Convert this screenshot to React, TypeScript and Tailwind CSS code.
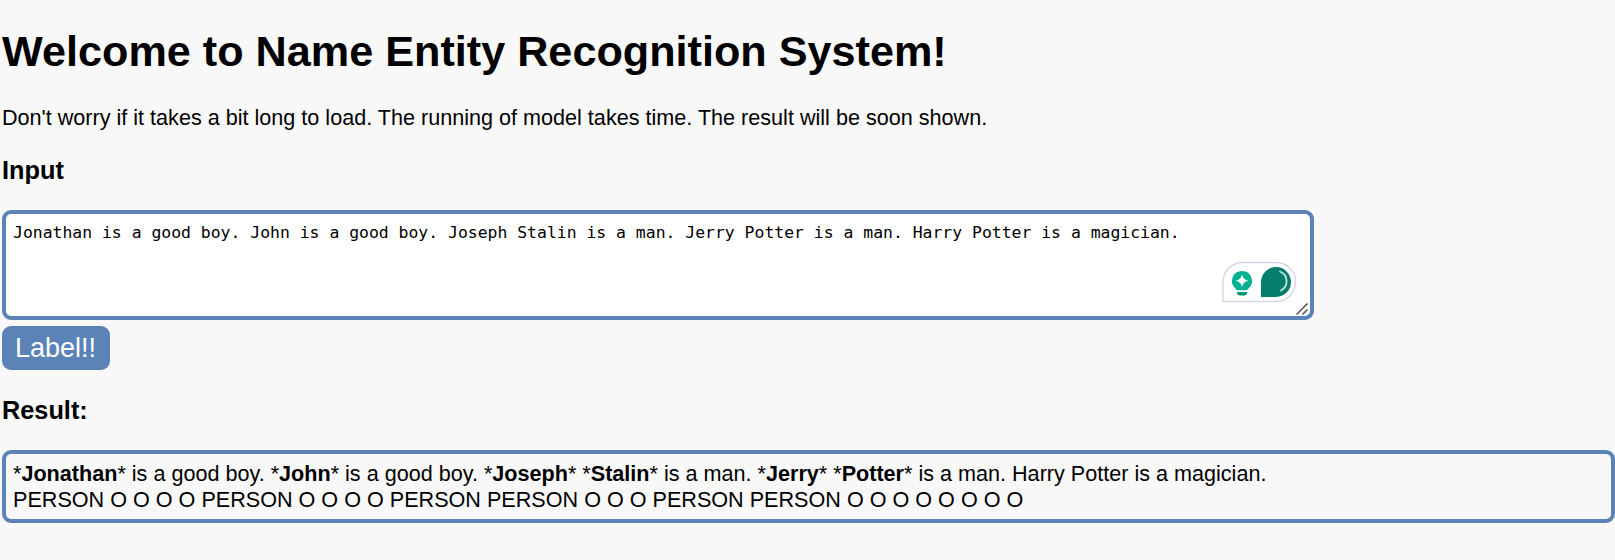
import React from 'react';

const sentence =
  'Jonathan is a good boy. John is a good boy. Joseph Stalin is a man. Jerry Potter is a man. Harry Potter is a magician.';

const tags =
  'PERSON O O O O PERSON O O O O PERSON PERSON O O O PERSON PERSON O O O O O O O O';

function AssistantBadge() {
  return (
    <svg className="absolute right-[12px] bottom-[13px]" width="76" height="42" viewBox="0 0 76 42" fill="none">
      <path
        d="M1 40.5V20.500A19.500 19.500 0 0 1 20.500 1.500H54A19.500 19.500 0 0 1 54 40.500Z"
        fill="#fff"
        stroke="#d3d6e4"
        strokeWidth="1.4"
      />
      <path
        d="M20 10a10 10 0 0 1 6.600 17.500c-.9.8-1.300 1.200-1.700 1.800h-9.800c-.4-.6-.8-1-1.700-1.800A10 10 0 0 1 20 10Z"
        fill="#00b292"
      />
      <path d="M15 31h10v.6a3 3 0 0 1-3 3h-4a3 3 0 0 1-3-3Z" fill="#009678" />
      <path
        d="M20 13.600c1.300 4 2.200 4.900 6.200 6.200-4 1.300-4.900 2.200-6.200 6.200-1.300-4-2.200-4.900-6.200-6.200 4-1.300 4.900-2.200 6.200-6.200Z"
        fill="#fff"
      />
      <path d="M39 36V21A15 15 0 1 1 54 36Z" fill="#047d6c" />
      <path d="M58 10.500A10.500 10.500 0 0 1 59 29.500" stroke="#c2e6df" strokeWidth="1.800" strokeLinecap="round" />
    </svg>
  );
}

function ResizeGrip() {
  return (
    <svg className="absolute right-[2px] bottom-[1px]" width="12" height="12" viewBox="0 0 12 12" fill="none">
      <path d="M0.500 11.500L11.500 0.500M6.500 11.500L11.500 6.500" stroke="#505050" strokeWidth="1.500" />
    </svg>
  );
}

export default function App() {
  return (
    <main className="h-[560px] overflow-hidden bg-[#f8f8f8] pl-[2px] pt-[27px] font-['Liberation_Sans',Arial,sans-serif] text-[21.6px] leading-[25px] text-black">
      <h1 className="h-[49px] whitespace-nowrap text-[43.2px] leading-[49px] font-bold">
        Welcome to Name Entity Recognition System!
      </h1>
      <p className="mt-[29px] h-[25px] whitespace-nowrap">
        Don't worry if it takes a bit long to load. The running of model takes time. The result will be soon shown.
      </p>
      <h3 className="mt-[26px] h-[29px] text-[25.3px] leading-[29px] font-bold">Input</h3>
      <div className="relative mt-[25px] h-[110px] w-[1312px] rounded-[9px] border-4 border-[#5b83b7] bg-white pl-[7px] pt-[8px] font-['DejaVu_Sans_Mono',monospace] text-[16.43px] leading-[21px] whitespace-nowrap">
        {sentence}
        <AssistantBadge />
        <ResizeGrip />
      </div>
      <button className="mt-[6px] flex h-[44px] w-[108px] items-center justify-center rounded-[9px] bg-[#5b83b7] pt-px pr-px text-[27px] leading-[31px] text-white">
        Label!!
      </button>
      <h3 className="mt-[26px] h-[29px] text-[25.3px] leading-[29px] font-bold">Result:</h3>
      <section className="mt-[25px] h-[73px] rounded-[9px] border-4 border-[#5b83b7] pl-[7px] pt-[7px] leading-[26px] whitespace-nowrap">
        <p>
          *<b>Jonathan</b>* is a good boy. *<b>John</b>* is a good boy. *<b>Joseph</b>* *<b>Stalin</b>* is a man. *
          <b>Jerry</b>* *<b>Potter</b>* is a man. Harry Potter is a magician.
        </p>
        <p>{tags}</p>
      </section>
    </main>
  );
}
